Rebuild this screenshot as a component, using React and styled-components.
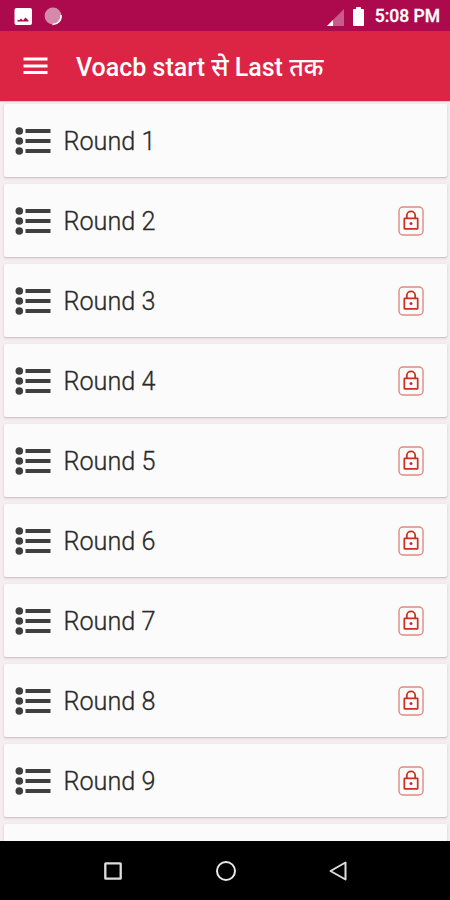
import React from 'react';
import styled, { createGlobalStyle } from 'styled-components';

const GlobalStyle = createGlobalStyle`
  * {
    box-sizing: border-box;
  }
  body {
    margin: 0;
    font-family: Roboto, 'Noto Sans', sans-serif;
  }
`;

const Screen = styled.div`
  width: 450px;
  height: 900px;
  display: flex;
  flex-direction: column;
  overflow: hidden;
  background: #f5edf0;
`;

const StatusBar = styled.div`
  flex: 0 0 30px;
  display: flex;
  align-items: center;
  justify-content: space-between;
  background: #ad0a4e;
  color: #fff;
`;

const StatusTime = styled.span`
  font-size: 17.5px;
  font-weight: 500;
  line-height: 29px;
  padding: 2px 10px 0 0;
  -webkit-text-stroke: 0.3px #fff;
`;

const StatusGroup = styled.div`
  display: flex;
  align-items: center;
`;

const Toolbar = styled.header`
  flex: 0 0 70px;
  display: flex;
  align-items: center;
  padding-left: 23px;
  background: #dc2545;
  color: #fff;
`;

const Title = styled.h1`
  margin: 3px 0 0 28px;
  font-size: 25px;
  font-weight: 500;
  line-height: 30px;
  white-space: nowrap;
`;

const Rounds = styled.ul`
  flex: 1;
  min-height: 0;
  margin: 0;
  padding: 2px 3px 0 4px;
  overflow: hidden;
  list-style: none;
  border-top: 1px solid #d5cbcd;
`;

const Card = styled.li`
  height: 73px;
  margin-bottom: 7px;
  padding: 0 23px 0 11px;
  display: flex;
  align-items: center;
  border-radius: 2px;
  background: #fbfbfb;
  box-shadow: 0 1px 1px #cfc6c9, 0 1px 3px rgba(90, 60, 70, 0.16);
`;

const Label = styled.span`
  flex: 1;
  margin: 2px 0 0 12.5px;
  font-size: 25.2px;
  font-weight: 300;
  line-height: 30px;
  color: #2a2a2a;
  -webkit-text-stroke: 0.3px #2a2a2a;
`;

const NavBar = styled.nav`
  flex: 0 0 59px;
  display: flex;
  align-items: center;
  justify-content: space-between;
  padding: 0 102px 0 103px;
  background: #000;
`;

const PictureIcon = () => (
  <svg width="64" height="30" viewBox="0 0 64 30">
    <rect x="14.5" y="7" width="17.5" height="17" rx="2" fill="#fff" />
    <path d="M17.5 20.5v-1.500h2l1.500-1.500 2 2 2.500-3 3 3v1z" fill="#ad0a4e" />
    <circle cx="53" cy="15" r="8.4" fill="#d48bab" />
    <path d="M61 14a8.300 8.300 0 0 1-8.500 9.400" fill="none" stroke="#fff" strokeWidth="1.500" />
  </svg>
);

const SignalIcon = () => (
  <svg width="48" height="30" viewBox="0 0 48 30">
    <path d="M17 8v17H0z" fill="#c75c8b" />
    <path d="M6 19v6H0z" fill="#fff" />
    <path d="M29.500 6.500h4v2h3v16h-10v-16h3z" fill="#fff" stroke="#fff" strokeLinejoin="round" />
  </svg>
);

const MenuIcon = () => (
  <svg width="25" height="18" viewBox="0 0 25 18">
    <path d="M.5 2h24M.5 9h24M.5 15.500h24" stroke="#fff" strokeWidth="2.800" />
  </svg>
);

const ListIcon = () => (
  <svg width="36" height="28" viewBox="0 0 36 28">
    {[4, 14, 24].map((y) => (
      <g key={y} fill="#3f3f3f">
        <circle cx="4.300" cy={y} r="3.800" />
        <rect x="10.500" y={y - 2} width="25" height="4" />
      </g>
    ))}
  </svg>
);

const LockIcon = () => (
  <svg width="26" height="30" viewBox="0 0 26 30" fill="none">
    <rect x="1" y="1" width="24" height="28" rx="4" stroke="#df8a80" strokeWidth="1.400" />
    <path d="M8.800 12v-2.500a4.200 4.200 0 0 1 8.400 0V12" stroke="#c8321c" strokeWidth="1.800" />
    <rect x="6.300" y="12.300" width="13.400" height="10.500" rx="0.500" stroke="#c8321c" strokeWidth="1.700" />
    <circle cx="13" cy="17.500" r="1.500" fill="#c8321c" />
  </svg>
);

const rounds = Array.from({ length: 9 }, (_, i) => ({ id: i + 1, locked: i > 0 }));

const App = () => {
  return (
    <>
      <GlobalStyle />
      <Screen>
        <StatusBar>
          <PictureIcon />
          <StatusGroup>
            <SignalIcon />
            <StatusTime>5:08 PM</StatusTime>
          </StatusGroup>
        </StatusBar>
        <Toolbar>
          <MenuIcon />
          <Title>Voacb start से Last तक</Title>
        </Toolbar>
        <Rounds>
          {rounds.map(({ id, locked }) => (
            <Card key={id}>
              <ListIcon />
              <Label>Round {id}</Label>
              {locked && <LockIcon />}
            </Card>
          ))}
          <Card />
        </Rounds>
        <NavBar>
          <svg width="20" height="20" viewBox="0 0 20 20" fill="none" stroke="#dedede" strokeWidth="2.300">
            <rect x="2.300" y="2.300" width="15.400" height="15.400" rx="0.500" />
          </svg>
          <svg width="22" height="22" viewBox="0 0 22 22" fill="none" stroke="#e8e8e8" strokeWidth="2">
            <circle cx="11" cy="11" r="9" />
          </svg>
          <svg width="20" height="22" viewBox="0 0 20 22" fill="none" stroke="#dedede" strokeWidth="2">
            <path d="M17.500 2.500v17L2.500 11z" strokeLinejoin="round" />
          </svg>
        </NavBar>
      </Screen>
    </>
  );
};

export default App;
